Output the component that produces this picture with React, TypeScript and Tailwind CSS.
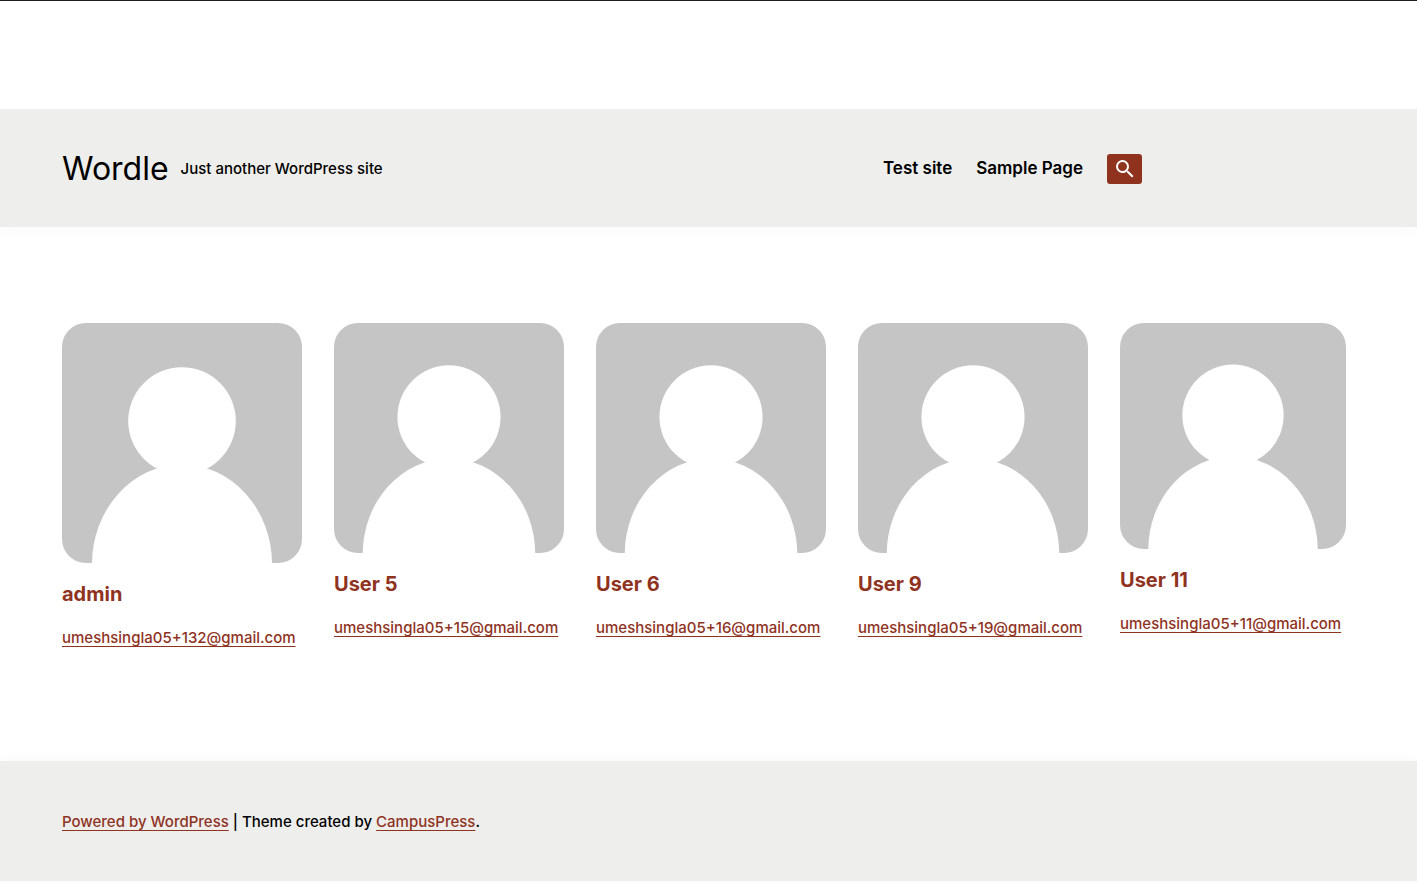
import React from "react";
import { MdSearch } from "react-icons/md";

type User = { name: string; email: string };

const users: User[] = [
  { name: "admin", email: "umeshsingla05+132@gmail.com" },
  { name: "User 5", email: "umeshsingla05+15@gmail.com" },
  { name: "User 6", email: "umeshsingla05+16@gmail.com" },
  { name: "User 9", email: "umeshsingla05+19@gmail.com" },
  { name: "User 11", email: "umeshsingla05+11@gmail.com" },
];

const linkClass =
  "text-[#8f331f] underline decoration-1 underline-offset-3 hover:no-underline";

function Avatar({ name }: { name: string }) {
  return (
    <svg
      viewBox="0 0 240 240"
      role="img"
      aria-label={name}
      className="block aspect-square w-full rounded-3xl bg-[#c5c5c5]"
    >
      <circle cx="120" cy="98" r="53.8" fill="#fff" />
      <ellipse cx="120" cy="241" rx="90" ry="99.5" fill="#fff" />
    </svg>
  );
}

function UserCard({ user }: { user: User }) {
  return (
    <li>
      <Avatar name={user.name} />
      <h2 className="mt-[15px] text-xl leading-8 font-bold text-[#8f331f]">
        <a href="#profile">{user.name}</a>
      </h2>
      <p className="mt-4 leading-6 whitespace-nowrap">
        <a href={`mailto:${user.email}`} className={linkClass}>
          {user.email}
        </a>
      </p>
    </li>
  );
}

export default function App() {
  return (
    <div className="min-h-screen border-t border-[#1d1b20] bg-white pt-27 font-['Inter',sans-serif] text-[15px] font-medium text-black">
      <header className="bg-[#eeeeec] px-[62px] pt-[43px] pb-[41px] shadow-[0_8px_16px_rgba(0,0,0,0.02)]">
        <div className="flex max-w-[1080px] flex-wrap items-center justify-between">
          <div className="flex items-center gap-3">
            <h1 className="text-[32px] leading-[34px] font-normal">
              <a href="#home">Wordle</a>
            </h1>
            <p className="leading-6">Just another WordPress site</p>
          </div>
          <nav className="flex items-center gap-6 text-[17px] font-semibold">
            <a href="#test-site">Test site</a>
            <a href="#sample-page">Sample Page</a>
            <button
              type="button"
              aria-label="Search"
              className="flex h-[30px] w-[35px] items-center justify-center rounded-[3px] bg-[#8f331f] text-white"
            >
              <MdSearch size={24} />
            </button>
          </nav>
        </div>
      </header>

      <main className="px-[62px] pt-24 pb-[111px]">
        <ul className="grid max-w-[1284px] grid-cols-[minmax(0,240fr)_minmax(0,230fr)_minmax(0,230fr)_minmax(0,230fr)_minmax(0,226fr)] gap-8">
          {users.map((user) => (
            <UserCard key={user.email} user={user} />
          ))}
        </ul>
      </main>

      <footer className="bg-[#eeeeec] px-[62px] pt-[49px] pb-[47px] shadow-[0_0_16px_rgba(0,0,0,0.04)]">
        <p className="leading-6">
          <a href="#wordpress" className={linkClass}>
            Powered by WordPress
          </a>
          {" | Theme created by "}
          <a href="#campuspress" className={linkClass}>
            CampusPress
          </a>
          .
        </p>
      </footer>
    </div>
  );
}
